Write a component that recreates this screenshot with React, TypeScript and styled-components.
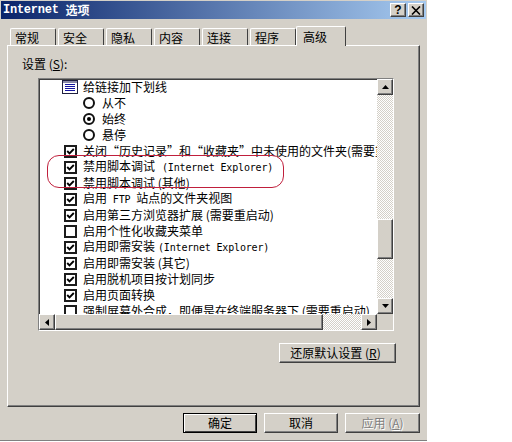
import React from "react";
import styled, { createGlobalStyle, css } from "styled-components";

const GlobalStyle = createGlobalStyle`
  html, body {
    margin: 0;
    padding: 0;
    background: #fff;
  }
`;

const FACE = "#d4d0c8";

const raised = css`
  background: ${FACE};
  border: 1px solid;
  border-color: #fff #404040 #404040 #fff;
  box-shadow: inset -1px -1px 0 #808080;
  box-sizing: border-box;
`;

const dither = css`
  background: repeating-conic-gradient(#fff 0 25%, ${FACE} 0 50%) 0 0 / 2px 2px;
`;

const Dialog = styled.div`
  position: relative;
  width: 427px;
  height: 441px;
  box-sizing: border-box;
  padding-top: 1px;
  background: ${FACE};
  border-bottom: 1px solid #808080;
  font-family: "Noto Sans CJK SC", "Liberation Sans", sans-serif;
  font-size: 12px;
  color: #000;
  display: flex;
  flex-direction: column;
`;

const TitleBar = styled.div`
  height: 18px;
  margin: 0 1px;
  padding: 0 3px 0 2px;
  display: flex;
  align-items: center;
  justify-content: space-between;
  background: linear-gradient(90deg, #0a246a, #a6caf0);
  color: #fff;
  font-weight: 700;
  font-size: 12px;
`;

const TitleText = styled.span`
  display: flex;
  align-items: center;
  gap: 7px;
  line-height: 18px;
`;

const TitleLatin = styled.span`
  font-family: "Liberation Mono", monospace;
  font-size: 12px;
  letter-spacing: -0.25px;
`;

const Mono = styled.span<{ $shift?: number }>`
  font-family: "DejaVu Sans Mono", "Liberation Mono", monospace;
  font-size: 10px;
  letter-spacing: -0.17px;
  white-space: pre;
  margin-left: ${(p) => p.$shift ?? 0}px;
`;

const TitleButtons = styled.div`
  display: flex;
  gap: 2px;
  margin-right: -1px;
`;

const TitleButton = styled.div`
  ${raised}
  width: 16px;
  height: 14px;
  display: flex;
  align-items: center;
  justify-content: center;
  color: #000;
  font-family: "Liberation Sans", sans-serif;
  font-weight: 700;
  font-size: 12px;
  line-height: 12px;
`;

const TabRow = styled.div`
  height: 19px;
  margin-top: 7px;
  padding-left: 10px;
  display: flex;
  align-items: flex-end;
  gap: 2px;
`;

const Tab = styled.div<{ $active?: boolean }>`
  position: relative;
  box-sizing: border-box;
  width: ${(p) => (p.$active ? 50 : 46)}px;
  height: ${(p) => (p.$active ? 20 : 17)}px;
  margin-left: ${(p) => (p.$active ? -2 : 0)}px;
  margin-bottom: ${(p) => (p.$active ? -1 : 0)}px;
  padding-left: ${(p) => (p.$active ? 6 : 4)}px;
  background: ${FACE};
  z-index: ${(p) => (p.$active ? 1 : 0)};
  border-top: 1px solid #fff;
  border-left: 1px solid #fff;
  border-right: 1px solid #404040;
  border-radius: 2px 2px 0 0;
  line-height: ${(p) => (p.$active ? 20 : 18)}px;
`;

const Panel = styled.div`
  height: 362px;
  margin: 0 7px;
  box-sizing: border-box;
  padding: 10px 23px 0 14px;
  border: 1px solid;
  border-color: #fff #404040 #404040 #fff;
  box-shadow: inset -1px -1px 0 #808080;
  display: flex;
  flex-direction: column;
`;

const SettingsLabel = styled.div`
  height: 22px;
  line-height: 15px;
  u {
    text-underline-offset: 1px;
  }
`;

const ListBox = styled.div`
  width: 356px;
  height: 253px;
  margin-left: 16px;
  box-sizing: border-box;
  border: 1px solid;
  border-color: #808080 #fff #fff #808080;
  box-shadow: inset 1px 1px 0 #404040;
  display: grid;
  grid-template-columns: 1fr 16px;
  grid-template-rows: 1fr 16px;
  background: #fff;
`;

const ListRows = styled.div`
  overflow: hidden;
  min-width: 0;
  min-height: 0;
`;

const Row = styled.div<{ $indent: number }>`
  height: 16px;
  padding-left: ${(p) => p.$indent}px;
  display: flex;
  align-items: center;
  white-space: nowrap;
  line-height: 16px;
`;

const RowLabel = styled.span<{ $gap: number }>`
  margin-left: ${(p) => p.$gap}px;
`;

const CheckFrame = styled.span`
  width: 13px;
  height: 13px;
  box-sizing: border-box;
  border: 2px solid #1c1c1c;
  flex: none;
  display: flex;
  align-items: center;
  justify-content: center;
`;

const RadioFrame = styled.span`
  width: 12px;
  height: 12px;
  box-sizing: border-box;
  border: 2px solid #111;
  border-radius: 50%;
  flex: none;
  display: flex;
  align-items: center;
  justify-content: center;
`;

const RadioDot = styled.span`
  width: 4px;
  height: 4px;
  border-radius: 50%;
  background: #000;
`;

const VBar = styled.div`
  display: flex;
  flex-direction: column;
  ${dither}
`;

const HBar = styled.div`
  display: flex;
  ${dither}
`;

const Corner = styled.div`
  background: ${FACE};
`;

const ScrollButton = styled.div`
  ${raised}
  width: 16px;
  height: 16px;
  flex: none;
  display: flex;
  align-items: center;
  justify-content: center;
`;

const VThumb = styled.div`
  ${raised}
  width: 16px;
  height: 40px;
  margin-top: 124px;
`;

const HThumb = styled.div`
  ${raised}
  width: 268px;
  height: 16px;
`;

const Spacer = styled.div`
  flex: 1;
`;

const PushButton = styled.div<{ $width: number; $isDefault?: boolean; $disabled?: boolean }>`
  ${raised}
  width: ${(p) => p.$width}px;
  height: 20px;
  text-align: center;
  line-height: 17px;
  ${(p) =>
    p.$isDefault &&
    css`
      border: 1px solid #000;
      box-shadow: inset 1px 1px 0 #fff, inset -1px -1px 0 #404040;
    `}
  ${(p) =>
    p.$disabled &&
    css`
      color: #808080;
      text-shadow: 1px 1px 0 #fff;
    `}
`;

const ResetRow = styled.div`
  margin-top: 12px;
  display: flex;
  justify-content: flex-end;
`;

const ResetText = styled.span`
  margin-left: -4px;
`;

const Footer = styled.div`
  padding: 6px 7px 0 0;
  display: flex;
  justify-content: flex-end;
  gap: 7px;
`;

const RedOval = styled.div`
  position: absolute;
  left: 47px;
  top: 155px;
  width: 237px;
  height: 33px;
  box-sizing: border-box;
  border: 1px solid #c01f3c;
  border-radius: 12px;
`;

const Arrow = ({ dir }: { dir: "up" | "down" | "left" | "right" }) => {
  const points = {
    up: "3.5,0 7,4 0,4",
    down: "0,0 7,0 3.5,4",
    left: "4,0 4,7 0,3.5",
    right: "0,0 4,3.5 0,7",
  }[dir];
  const vertical = dir === "up" || dir === "down";
  return (
    <svg width={vertical ? 7 : 4} height={vertical ? 4 : 7}>
      <polygon points={points} fill="#000" />
    </svg>
  );
};

const Check = () => (
  <svg width="9" height="9" viewBox="0 0 9 9">
    <path d="M1.2 4 L3.5 6.3 L7.8 2" fill="none" stroke="#000" strokeWidth="1.9" />
  </svg>
);

const GroupIcon = () => (
  <svg width="16" height="14" viewBox="0 0 16 14" style={{ flex: "none" }}>
    <rect x="0.5" y="0.5" width="15" height="13" fill="#fff" stroke="#202040" />
    <rect x="1" y="1" width="14" height="2" fill="#8a8aa8" />
    <path d="M3 4.5H13M3 6.5H13M3 8.5H13M3 10.5H13" stroke="#1414a0" />
  </svg>
);

const Closed = () => (
  <svg width="10" height="9" viewBox="0 0 10 9">
    <path d="M1 0.5 L9 8.5 M9 0.5 L1 8.5" stroke="#000" strokeWidth="1.6" />
  </svg>
);

type Item = {
  kind: "check" | "empty";
  label: React.ReactNode;
};

const items: Item[] = [
  { kind: "check", label: <>关闭“历史记录”和“收藏夹”中未使用的文件夹(需要重启动)</> },
  { kind: "check", label: <>禁用脚本调试<Mono $shift={7}>(Internet Explorer)</Mono></> },
  { kind: "check", label: <>禁用脚本调试 (其他)</> },
  { kind: "check", label: <>启用<Mono> FTP </Mono>站点的文件夹视图</> },
  { kind: "check", label: <>启用第三方浏览器扩展 (需要重启动)</> },
  { kind: "empty", label: <>启用个性化收藏夹菜单</> },
  { kind: "check", label: <>启用即需安装<Mono $shift={3}>(Internet Explorer)</Mono></> },
  { kind: "check", label: <>启用即需安装 (其它)</> },
  { kind: "check", label: <>启用脱机项目按计划同步</> },
  { kind: "check", label: <>启用页面转换</> },
  { kind: "empty", label: <>强制屏幕外合成，即便是在终端服务器下 (需要重启动)</> },
];

const tabs = ["常规", "安全", "隐私", "内容", "连接", "程序"];
const radios = ["从不", "始终", "悬停"];

export default function App() {
  return (
    <>
      <GlobalStyle />
      <Dialog>
        <TitleBar>
          <TitleText>
            <TitleLatin>Internet</TitleLatin> 选项
          </TitleText>
          <TitleButtons>
            <TitleButton>?</TitleButton>
            <TitleButton>
              <Closed />
            </TitleButton>
          </TitleButtons>
        </TitleBar>
        <TabRow>
          {tabs.map((t) => (
            <Tab key={t}>{t}</Tab>
          ))}
          <Tab $active>高级</Tab>
        </TabRow>
        <Panel>
          <SettingsLabel>
            设置 (<u>S</u>):
          </SettingsLabel>
          <ListBox>
            <ListRows>
              <Row $indent={23}>
                <GroupIcon />
                <RowLabel $gap={5}>给链接加下划线</RowLabel>
              </Row>
              {radios.map((r, i) => (
                <Row key={r} $indent={44}>
                  <RadioFrame>{i === 1 && <RadioDot />}</RadioFrame>
                  <RowLabel $gap={7}>{r}</RowLabel>
                </Row>
              ))}
              {items.map((item, i) => (
                <Row key={i} $indent={25}>
                  <CheckFrame>{item.kind === "check" && <Check />}</CheckFrame>
                  <RowLabel $gap={6}>{item.label}</RowLabel>
                </Row>
              ))}
            </ListRows>
            <VBar>
              <ScrollButton>
                <Arrow dir="up" />
              </ScrollButton>
              <VThumb />
              <Spacer />
              <ScrollButton>
                <Arrow dir="down" />
              </ScrollButton>
            </VBar>
            <HBar>
              <ScrollButton>
                <Arrow dir="left" />
              </ScrollButton>
              <HThumb />
              <Spacer />
              <ScrollButton>
                <Arrow dir="right" />
              </ScrollButton>
            </HBar>
            <Corner />
          </ListBox>
          <ResetRow>
            <PushButton $width={117}>
              <ResetText>还原默认设置 (<u>R</u>)</ResetText>
            </PushButton>
          </ResetRow>
        </Panel>
        <Footer>
          <PushButton $width={74} $isDefault>确定</PushButton>
          <PushButton $width={74}>取消</PushButton>
          <PushButton $width={75} $disabled>应用 (<u>A</u>)</PushButton>
        </Footer>
        <RedOval />
      </Dialog>
    </>
  );
}
